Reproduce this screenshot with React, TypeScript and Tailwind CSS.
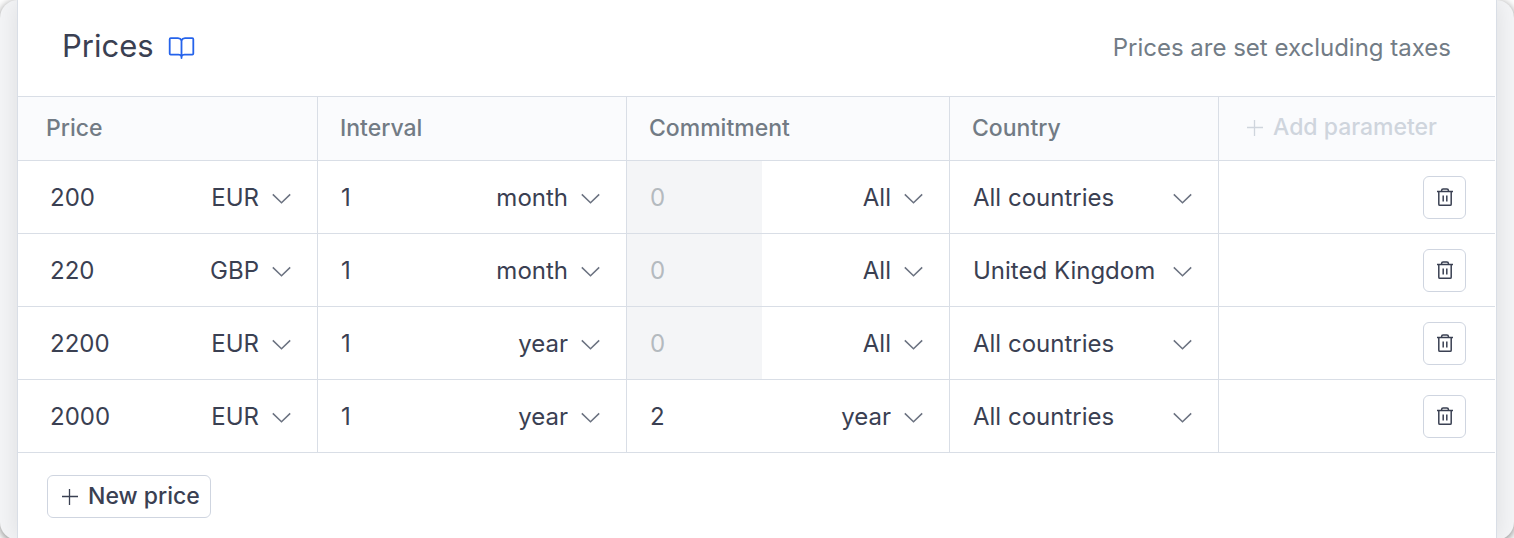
import { useState } from "react";

type PriceRow = {
  price: string;
  currency: string;
  interval: string;
  intervalUnit: string;
  commitment: string;
  commitmentUnit: string;
  country: string;
};

const initialRows: PriceRow[] = [
  { price: "200", currency: "EUR", interval: "1", intervalUnit: "month", commitment: "", commitmentUnit: "All", country: "All countries" },
  { price: "220", currency: "GBP", interval: "1", intervalUnit: "month", commitment: "", commitmentUnit: "All", country: "United Kingdom" },
  { price: "2200", currency: "EUR", interval: "1", intervalUnit: "year", commitment: "", commitmentUnit: "All", country: "All countries" },
  { price: "2000", currency: "EUR", interval: "1", intervalUnit: "year", commitment: "2", commitmentUnit: "year", country: "All countries" },
];

const currencies = ["EUR", "GBP", "USD"];
const units = ["day", "week", "month", "year"];
const countries = ["All countries", "United Kingdom", "France", "Germany"];

function BookIcon() {
  return (
    <svg className="h-6 w-7" viewBox="0 0 28 24" fill="none" stroke="#2563eb" strokeWidth="1.8" strokeLinejoin="round" strokeLinecap="round" aria-hidden="true">
      <path d="M13.5 4.2 Q12.5 2.2 10 2.2 H2.7 Q1.7 2.2 1.7 3.2 V17.6 Q1.7 18.6 2.7 18.6 H10.5 Q12.9 18.6 13.5 20.2 Q14.1 18.6 16.5 18.6 H24.3 Q25.3 18.6 25.3 17.6 V3.2 Q25.3 2.2 24.3 2.2 H17 Q14.5 2.2 13.5 4.2 Z" />
      <path d="M13.5 4.2 V22" />
    </svg>
  );
}

function PlusIcon() {
  return (
    <svg className="size-4 shrink-0" viewBox="0 0 16 16" stroke="currentColor" strokeWidth="1.3" aria-hidden="true">
      <path d="M0 7.5 H16 M7.5 0 V16" />
    </svg>
  );
}

function TrashIcon() {
  return (
    <svg className="h-5 w-4" viewBox="0 0 16 20" fill="none" stroke="currentColor" strokeWidth="1.5" aria-hidden="true">
      <path d="M0 4.5 H16" />
      <path d="M4.6 4.4 V3.4 Q4.6 1.9 6.1 1.9 H9.9 Q11.4 1.9 11.4 3.4 V4.4" />
      <path d="M1.8 4.5 V17.2 Q1.8 18.3 2.9 18.3 H13.1 Q14.2 18.3 14.2 17.2 V4.5" />
      <path d="M6.2 8.5 V14.5 M9.8 8.5 V14.5" />
    </svg>
  );
}

function Select({ label, value, options, wide, onChange }: { label: string; value: string; options: string[]; wide?: boolean; onChange: (v: string) => void }) {
  return (
    <div className={wide ? "relative w-full" : "relative ml-auto"}>
      <select
        aria-label={label}
        value={value}
        onChange={(e) => onChange(e.target.value)}
        className={
          "block h-[72px] appearance-none bg-transparent pt-0.5 pr-[58px] outline-none " +
          (wide ? "w-full pl-[23px]" : "field-sizing-content")
        }
      >
        {options.map((o) => (
          <option key={o}>{o}</option>
        ))}
      </select>
      <svg className="pointer-events-none absolute top-8 right-[26px] h-3 w-[19px] text-[#6b7280]" viewBox="0 0 19 12" fill="none" stroke="currentColor" strokeWidth="1.5" aria-hidden="true">
        <path d="M0.8 1.4 L9.5 9.8 L18.2 1.4" />
      </svg>
    </div>
  );
}

function NumberBox({ label, value, disabled, first, onChange }: { label: string; value: string; disabled?: boolean; first?: boolean; onChange: (v: string) => void }) {
  return (
    <input
      aria-label={label}
      value={value}
      disabled={disabled}
      placeholder="0"
      onChange={(e) => onChange(e.target.value)}
      className={
        "h-[72px] w-[135px] min-w-0 shrink outline-none placeholder:text-[#b4babf] disabled:bg-[#f4f5f7] " +
        (first ? "pl-8" : "pl-[23px]")
      }
    />
  );
}

const th = "border-t border-r border-b border-[#d9dee6] pl-[22px] text-left font-medium";
const td = "border-r border-b border-[#d9dee6] p-0";

export default function App() {
  const [rows, setRows] = useState(initialRows);
  const update = (i: number, patch: Partial<PriceRow>) =>
    setRows(rows.map((r, j) => (j === i ? { ...r, ...patch } : r)));

  return (
    <div className="min-h-screen bg-white font-[Inter,sans-serif] text-2xl text-[#3a4052]">
      <div className="min-h-screen overflow-hidden rounded-[18px] bg-[#f4f5f7] px-[17px] shadow-[0_2px_8px_rgba(0,0,0,0.5)]">
        <section className="min-h-screen border-x border-[#d9dee6] bg-white pr-px shadow-[0_0_24px_rgba(0,0,0,0.1)]">
          <header className="flex h-24 items-center justify-between pr-11 pl-11">
            <div className="flex items-center gap-3.5">
              <h1 className="pb-1 text-[31px] leading-10 font-normal">Prices</h1>
              <a href="#docs" aria-label="Prices documentation">
                <BookIcon />
              </a>
            </div>
            <p className="text-[#727c86]">Prices are set excluding taxes</p>
          </header>
          <table className="w-full table-fixed border-separate border-spacing-0">
            <colgroup>
              <col className="w-[300px]" />
              <col className="w-[309px]" />
              <col className="w-[323px]" />
              <col className="w-[269px]" />
              <col />
            </colgroup>
            <thead className="bg-[#fafbfd] text-[23px] text-[#727b85]">
              <tr className="h-[65px]">
                <th className="border-t border-r border-b border-[#d9dee6] pl-7 text-left font-medium">Price</th>
                <th className={th}>Interval</th>
                <th className={th}>Commitment</th>
                <th className={th}>Country</th>
                <th className="border-t border-b border-[#d9dee6] pl-7 text-left font-medium">
                  <button className="flex items-center gap-2.5 pb-0.5 text-[#cfd5dd]">
                    <PlusIcon />
                    Add parameter
                  </button>
                </th>
              </tr>
            </thead>
            <tbody>
              {rows.map((r, i) => (
                <tr key={i}>
                  <td className={td}>
                    <div className="flex">
                      <NumberBox first label="Price" value={r.price} onChange={(price) => update(i, { price })} />
                      <Select label="Currency" value={r.currency} options={currencies} onChange={(currency) => update(i, { currency })} />
                    </div>
                  </td>
                  <td className={td}>
                    <div className="flex">
                      <NumberBox label="Interval" value={r.interval} onChange={(interval) => update(i, { interval })} />
                      <Select label="Interval unit" value={r.intervalUnit} options={units} onChange={(intervalUnit) => update(i, { intervalUnit })} />
                    </div>
                  </td>
                  <td className={td}>
                    <div className="flex">
                      <NumberBox label="Commitment" value={r.commitment} disabled={r.commitmentUnit === "All"} onChange={(commitment) => update(i, { commitment })} />
                      <Select label="Commitment unit" value={r.commitmentUnit} options={["All", ...units]} onChange={(commitmentUnit) => update(i, { commitmentUnit })} />
                    </div>
                  </td>
                  <td className={td}>
                    <Select wide label="Country" value={r.country} options={countries} onChange={(country) => update(i, { country })} />
                  </td>
                  <td className="border-b border-[#d9dee6] p-0">
                    <div className="flex justify-end pr-[29px]">
                      <button
                        aria-label="Delete price"
                        onClick={() => setRows(rows.filter((_, j) => j !== i))}
                        className="flex size-[43px] items-center justify-center rounded-md border border-[#cfd5e0]"
                      >
                        <TrashIcon />
                      </button>
                    </div>
                  </td>
                </tr>
              ))}
            </tbody>
          </table>
          <div className="px-[29px] py-[22px]">
            <button
              onClick={() => setRows([...rows, { ...initialRows[0], price: "" }])}
              className="flex h-[43px] items-center gap-2.5 rounded-md border border-[#cfd5e0] pr-2.5 pl-3.5 text-[23px] font-medium"
            >
              <PlusIcon />
              New price
            </button>
          </div>
        </section>
      </div>
    </div>
  );
}
